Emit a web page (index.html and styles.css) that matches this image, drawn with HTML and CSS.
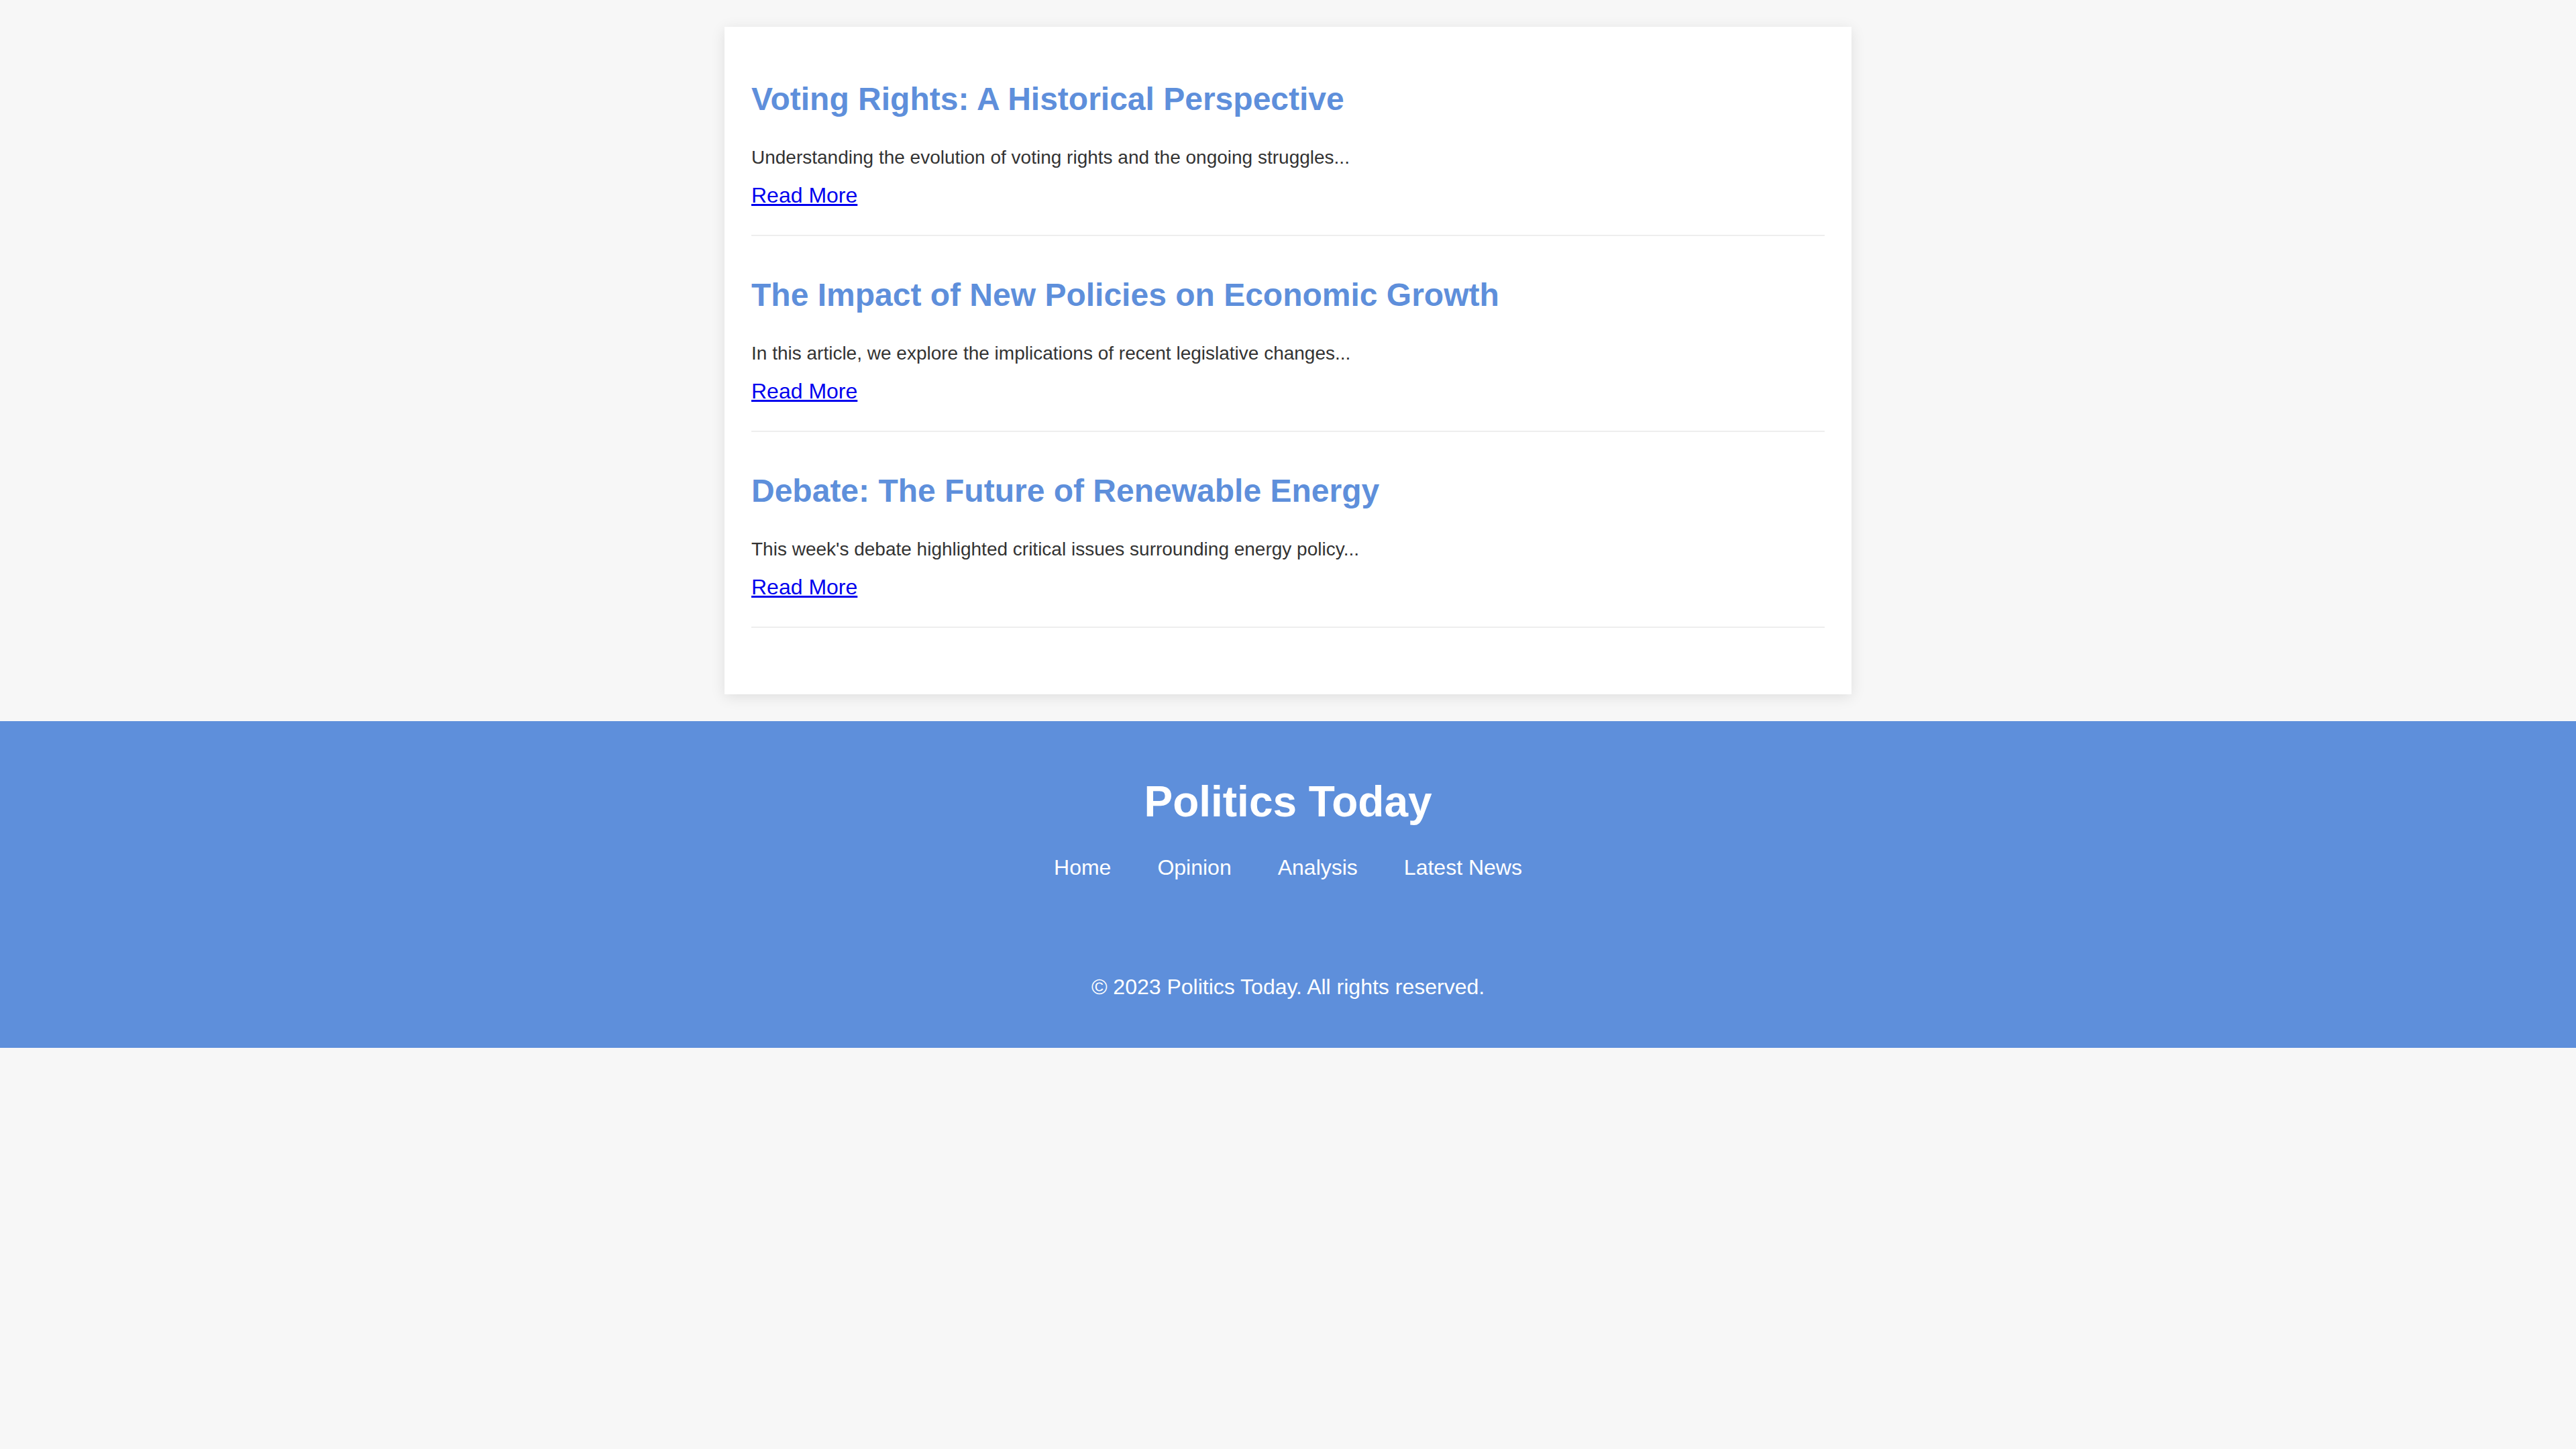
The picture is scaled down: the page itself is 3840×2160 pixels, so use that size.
FILE: index.html
```html
<!DOCTYPE html>
<html lang="en">
<head>
<meta charset="utf-8">
<title>Politics Today</title>
<link rel="stylesheet" href="styles.css">
</head>
<body>
<main class="card">
  <article class="post">
    <h2 class="post-title">Voting Rights: A Historical Perspective</h2>
    <p class="post-excerpt">Understanding the evolution of voting rights and the ongoing struggles...</p>
    <a href="#" class="read-more">Read More</a>
  </article>
  <article class="post">
    <h2 class="post-title">The Impact of New Policies on Economic Growth</h2>
    <p class="post-excerpt">In this article, we explore the implications of recent legislative changes...</p>
    <a href="#" class="read-more">Read More</a>
  </article>
  <article class="post">
    <h2 class="post-title">Debate: The Future of Renewable Energy</h2>
    <p class="post-excerpt">This week's debate highlighted critical issues surrounding energy policy...</p>
    <a href="#" class="read-more">Read More</a>
  </article>
</main>
<footer class="site-footer">
  <h1 class="footer-title">Politics Today</h1>
  <nav class="footer-nav">
    <a href="#" class="footer-link">Home</a>
    <a href="#" class="footer-link">Opinion</a>
    <a href="#" class="footer-link">Analysis</a>
    <a href="#" class="footer-link">Latest News</a>
  </nav>
  <p class="copyright">© 2023 Politics Today. All rights reserved.</p>
</footer>
</body>
</html>
```
FILE: styles.css
```css
html, body {
  margin: 0;
  padding: 0;
}

body {
  background: #f7f7f7;
  font-family: "Liberation Sans", Arial, sans-serif;
  font-size: 32px;
  line-height: normal;
  color: #333;
}

.card {
  display: block;
  max-width: 1600px;
  margin: 40px auto 40px;
  padding: 40px 40px 79px;
  background: #ffffff;
  box-shadow: 0 4px 20px rgba(0, 0, 0, 0.1);
}

.post {
  padding: 40px 0 40px;
  margin: 0 0 20px;
  border-bottom: 2px solid #eeeeee;
}

.post-title {
  margin: 0 0 44px;
  font-size: 48px;
  font-weight: bold;
  color: #5e8fdb;
}

.post-excerpt {
  margin: 0 0 22px;
  font-size: 28px;
  color: #333333;
}

.read-more {
  color: #0000ee;
  text-decoration: underline;
}

.site-footer {
  background: #5e8fdb;
  color: #ffffff;
  text-align: center;
  padding: 40px 40px 40px;
}

.footer-title {
  margin: 42.88px 0;
  font-size: 64px;
  font-weight: bold;
  color: #ffffff;
}

.footer-nav {
  display: flex;
  justify-content: center;
  gap: 69px;
}

.footer-link {
  color: #ffffff;
  text-decoration: none;
  font-size: 32px;
}

.copyright {
  margin: 141px 0 32px;
  font-size: 32px;
  color: #ffffff;
}
```
